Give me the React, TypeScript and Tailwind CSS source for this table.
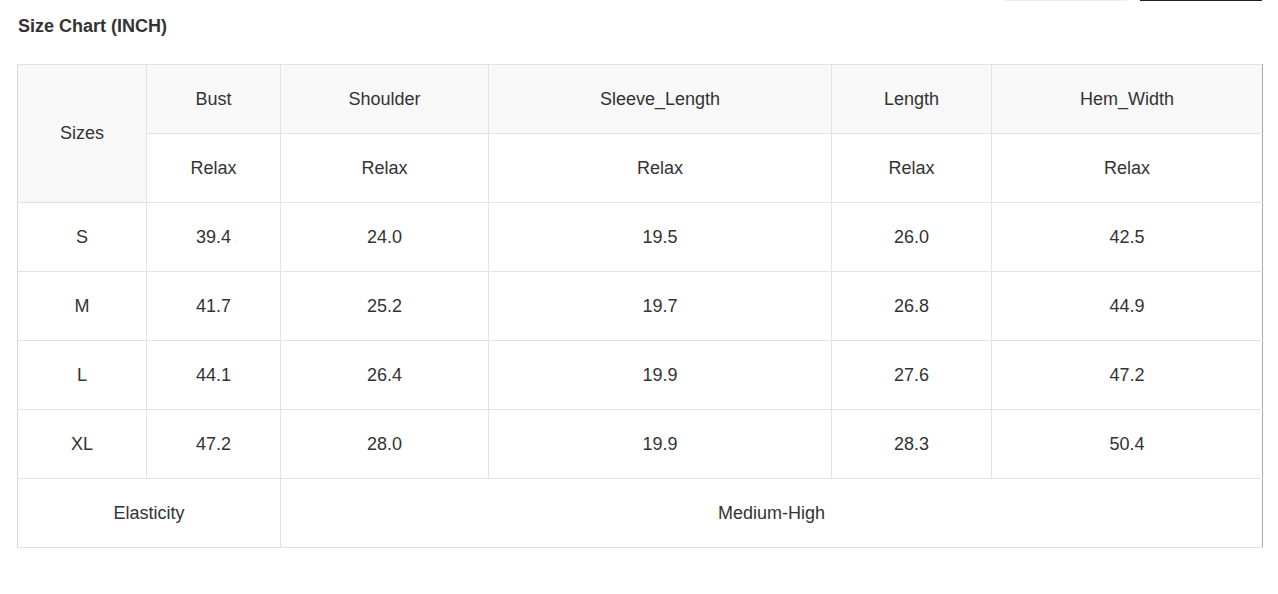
export default function App() {
  const cols = ["Bust", "Shoulder", "Sleeve_Length", "Length", "Hem_Width"];
  const rows = [
    { size: "S", values: ["39.4", "24.0", "19.5", "26.0", "42.5"] },
    { size: "M", values: ["41.7", "25.2", "19.7", "26.8", "44.9"] },
    { size: "L", values: ["44.1", "26.4", "19.9", "27.6", "47.2"] },
    { size: "XL", values: ["47.2", "28.0", "19.9", "28.3", "50.4"] },
  ];

  const cell = "border border-[#e3e3e3] text-center align-middle font-normal";
  const last = "border-r-[#a8a8a8]";

  return (
    <div
      className="relative h-[594px] w-full bg-white text-[#333] text-[18px]"
      style={{ fontFamily: '"Liberation Sans", Arial, sans-serif' }}
    >
      {/* bottoms of buttons cut off above */}
      <div className="flex justify-end gap-[13px] pr-[16px]">
        <div className="h-px w-[122px] bg-[#eeeeee]" />
        <div className="h-px w-[122px] bg-[#222]" />
      </div>

      <div className="pl-[17px]">
        <h2 className="pl-px pt-[14px] text-[18px] font-bold leading-[23px] text-[#333]">
          Size Chart (INCH)
        </h2>

        <table className="mt-[26px] w-[1245px] table-fixed border-collapse">
          <colgroup>
            <col className="w-[129px]" />
            <col className="w-[134px]" />
            <col className="w-[208px]" />
            <col className="w-[343px]" />
            <col className="w-[160px]" />
            <col className="w-[271px]" />
          </colgroup>
          <thead>
            <tr className="h-[69px] bg-[#f8f8f8]">
              <th rowSpan={2} className={`${cell} border-l-[#d6d6d6]`}>
                Sizes
              </th>
              {cols.map((c, i) => (
                <th key={c} className={`${cell} ${i === cols.length - 1 ? last : ""}`}>
                  {c}
                </th>
              ))}
            </tr>
            <tr className="h-[69px]">
              {cols.map((c, i) => (
                <th
                  key={c}
                  className={`${cell} bg-white ${i === cols.length - 1 ? last : ""}`}
                >
                  Relax
                </th>
              ))}
            </tr>
          </thead>
          <tbody>
            {rows.map((r) => (
              <tr key={r.size} className="h-[69px]">
                <td className={`${cell} border-l-[#d6d6d6]`}>{r.size}</td>
                {r.values.map((v, i) => (
                  <td
                    key={i}
                    className={`${cell} ${i === r.values.length - 1 ? last : ""}`}
                  >
                    {v}
                  </td>
                ))}
              </tr>
            ))}
            <tr className="h-[69px]">
              <td colSpan={2} className={`${cell} border-l-[#d6d6d6]`}>
                Elasticity
              </td>
              <td colSpan={4} className={`${cell} ${last}`}>
                Medium-High
              </td>
            </tr>
          </tbody>
        </table>
      </div>
    </div>
  );
}
